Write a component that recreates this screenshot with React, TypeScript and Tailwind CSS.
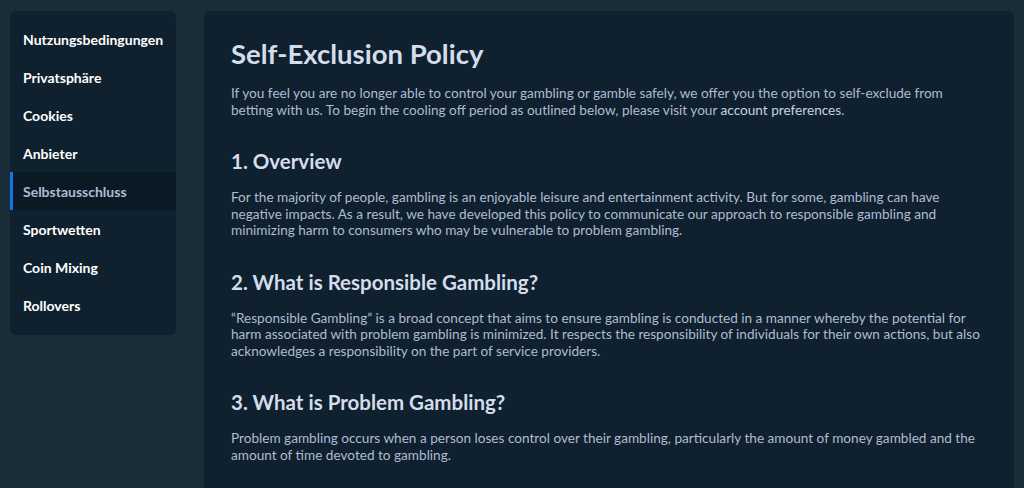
const NAV = [
  "Nutzungsbedingungen",
  "Privatsphäre",
  "Cookies",
  "Anbieter",
  "Selbstausschluss",
  "Sportwetten",
  "Coin Mixing",
  "Rollovers",
];

const SECTIONS = [
  {
    title: "1. Overview",
    body: "For the majority of people, gambling is an enjoyable leisure and entertainment activity. But for some, gambling can have negative impacts. As a result, we have developed this policy to communicate our approach to responsible gambling and minimizing harm to consumers who may be vulnerable to problem gambling.",
  },
  {
    title: "2. What is Responsible Gambling?",
    body: "“Responsible Gambling” is a broad concept that aims to ensure gambling is conducted in a manner whereby the potential for harm associated with problem gambling is minimized. It respects the responsibility of individuals for their own actions, but also acknowledges a responsibility on the part of service providers.",
  },
  {
    title: "3. What is Problem Gambling?",
    body: "Problem gambling occurs when a person loses control over their gambling, particularly the amount of money gambled and the amount of time devoted to gambling.",
  },
];

export default function App() {
  const active = "Selbstausschluss";

  return (
    <div
      className="h-[488px] overflow-hidden bg-[#1a2c38] flex items-start gap-[28px] px-[10px] pt-[11px]"
      style={{ fontFamily: "Lato, 'Open Sans', sans-serif" }}
    >
      {/* Sidebar */}
      <nav className="w-[166px] shrink-0 rounded-md bg-[#0f212e] pt-[9px] pb-[11px]">
        {NAV.map((item) => {
          const isActive = item === active;
          return (
            <div
              key={item}
              className={`h-[38px] flex items-center text-[14px] font-bold ${
                isActive
                  ? "bg-[#0a1a25] border-l-[3px] border-[#1475e1] pl-[10px] text-[#b1bad3]"
                  : "pl-[13px] text-white"
              }`}
            >
              {item}
            </div>
          );
        })}
      </nav>

      {/* Content */}
      <main className="flex-1 h-[600px] rounded-md bg-[#0f212e] pl-[27px] pr-[28px] pt-[27px]">
        <h1 className="text-[27.5px] font-bold leading-[32px] text-[#d5dceb]">
          Self-Exclusion Policy
        </h1>
        <p className="mt-[15px] text-[13.6px] leading-[16.5px] text-[#b1bad3]">
          If you feel you are no longer able to control your gambling or gamble safely, we offer you the option to self-exclude from betting with us. To begin the cooling off period as outlined below, please visit your{" "}
          <span className="text-[#c9d1e2]">account preferences</span>.
        </p>

        {SECTIONS.map((s) => (
          <section key={s.title} className="mt-[31px]">
            <h2 className="text-[20.5px] font-bold leading-[24px] text-[#d5dceb]">
              {s.title}
            </h2>
            <p className="mt-[16px] text-[13.6px] leading-[16.5px] text-[#b1bad3]">
              {s.body}
            </p>
          </section>
        ))}
      </main>
    </div>
  );
}
